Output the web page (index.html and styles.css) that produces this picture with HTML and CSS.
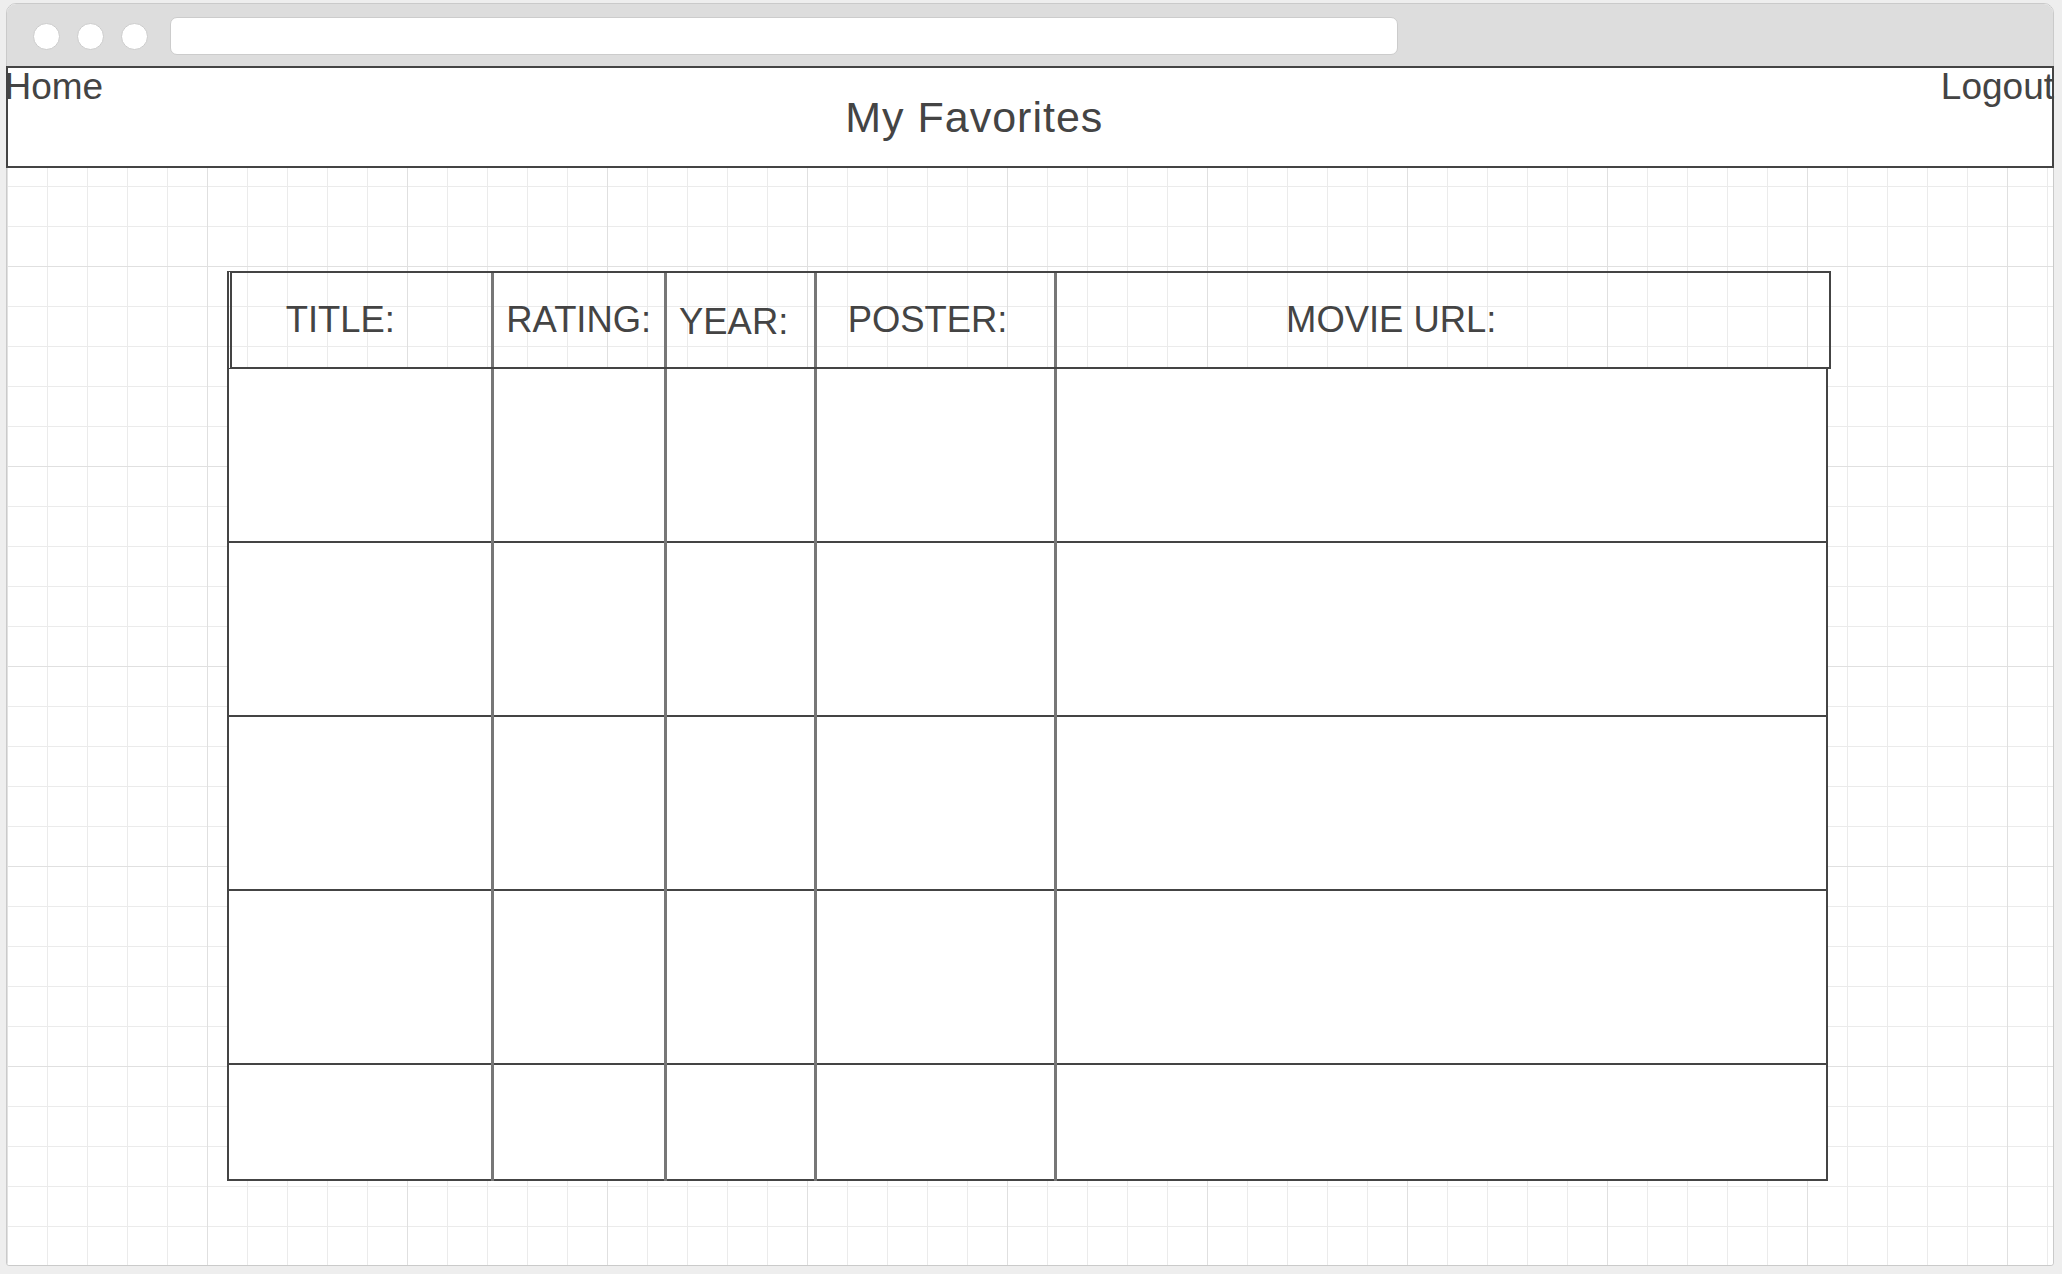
FILE: index.html
```html
<!DOCTYPE html>
<html lang="en">
<head>
<meta charset="utf-8">
<title>My Favorites</title>
<link rel="stylesheet" href="styles.css">
</head>
<body>
<div class="window">
  <div class="chrome">
    <span class="dot"></span>
    <span class="dot"></span>
    <span class="dot"></span>
    <div class="address"></div>
  </div>
  <div class="canvas">
    <header class="topbar">
      <a class="nav-link nav-home">Home</a>
      <h1 class="page-title">My Favorites</h1>
      <a class="nav-link nav-logout">Logout</a>
    </header>
    <section class="favorites">
      <div class="thead">
        <div class="th th-title">TITLE:</div>
        <div class="th th-rating">RATING:</div>
        <div class="th th-year">YEAR:</div>
        <div class="th th-poster">POSTER:</div>
        <div class="th th-url">MOVIE URL:</div>
      </div>
      <div class="tbody">
        <div class="col col-title">
          <div class="cell"></div><div class="cell"></div><div class="cell"></div><div class="cell"></div><div class="cell cell-last"></div>
        </div>
        <div class="col col-rating">
          <div class="cell"></div><div class="cell"></div><div class="cell"></div><div class="cell"></div><div class="cell cell-last"></div>
        </div>
        <div class="col col-year">
          <div class="cell"></div><div class="cell"></div><div class="cell"></div><div class="cell"></div><div class="cell cell-last"></div>
        </div>
        <div class="col col-poster">
          <div class="cell"></div><div class="cell"></div><div class="cell"></div><div class="cell"></div><div class="cell cell-last"></div>
        </div>
        <div class="col col-url">
          <div class="cell"></div><div class="cell"></div><div class="cell"></div><div class="cell"></div><div class="cell cell-last"></div>
        </div>
      </div>
    </section>
  </div>
</div>
</body>
</html>
```
FILE: styles.css
```css
html, body {
  margin: 0;
  padding: 0;
}

body {
  background: #eeeeee;
  font-family: "Liberation Sans", Arial, sans-serif;
  color: #444444;
  height: 1274px;
  overflow: hidden;
}

.window {
  box-sizing: border-box;
  width: 2048px;
  height: 1263px;
  margin: 3px 0 0 6px;
  border: 1px solid #cacaca;
  border-radius: 10px 10px 3px 3px;
  background: #ffffff;
  display: flex;
  flex-direction: column;
}

.chrome {
  box-sizing: border-box;
  height: 62px;
  flex: none;
  background: #dddddd;
  border-radius: 9px 9px 0 0;
  display: flex;
  align-items: center;
  gap: 17px;
  padding: 2px 0 0 26px;
}

.dot {
  box-sizing: border-box;
  width: 27px;
  height: 27px;
  border-radius: 50%;
  background: #ffffff;
  border: 1.5px solid #cccccc;
}

.address {
  box-sizing: border-box;
  width: 1228px;
  height: 38px;
  margin-left: 5px;
  background: #ffffff;
  border: 1px solid #cccccc;
  border-radius: 7px;
}

.canvas {
  flex: 1;
  background-color: #ffffff;
  background-image:
    linear-gradient(to right, #e0e0e0 1px, transparent 1px),
    linear-gradient(to bottom, #e0e0e0 1px, transparent 1px),
    linear-gradient(to right, #ebebeb 1px, transparent 1px),
    linear-gradient(to bottom, #ebebeb 1px, transparent 1px);
  background-size: 200px 200px, 200px 200px, 40px 40px, 40px 40px;
  border-radius: 0 0 3px 3px;
}

.topbar {
  box-sizing: border-box;
  height: 101.5px;
  margin: 0 -1px;
  border: 2px solid #444444;
  background: #ffffff;
  display: flex;
  align-items: flex-start;
}

.nav-link {
  font-size: 37px;
  line-height: normal;
  margin-top: -2.5px;
  color: #444444;
  white-space: nowrap;
}

.nav-home {
  margin-left: -3.5px;
}

.nav-logout {
  margin-right: -2px;
}

.page-title {
  flex: 1;
  margin: 25.2px 0 0 0;
  padding-left: 742px;
  font-size: 43px;
  font-weight: normal;
  letter-spacing: 1px;
  line-height: normal;
  white-space: nowrap;
}

.favorites {
  padding: 103.2px 0 0 219.7px;
}

.thead {
  box-sizing: border-box;
  display: flex;
  width: 1604.3px;
  height: 98.6px;
  border: 2px solid #444444;
  border-left: 5px double #444444;
}

.th {
  box-sizing: border-box;
  display: flex;
  align-items: center;
  font-size: 36.4px;
  white-space: nowrap;
  border-right: 3px solid #777777;
}

.th-title { width: 262px; padding-left: 54px; }
.th-rating { width: 173.6px; padding-left: 12.6px; }
.th-year { width: 150px; padding-left: 11.8px; padding-top: 4px; }
.th-poster { width: 240px; padding-left: 30.4px; }
.th-url { flex: 1; padding-left: 228.8px; border-right: none; }

.tbody {
  box-sizing: border-box;
  display: flex;
  width: 1601px;
  border-left: 2px solid #444444;
  border-right: 2px solid #444444;
  background: #ffffff;
}

.col {
  box-sizing: border-box;
  border-right: 3px solid #777777;
}

.col-title { width: 265px; }
.col-rating { width: 173.6px; }
.col-year { width: 150px; }
.col-poster { width: 240px; }
.col-url { flex: 1; border-right: none; }

.cell {
  box-sizing: border-box;
  height: 174px;
  border-bottom: 2px solid #444444;
}

.cell-last {
  height: 116px;
}
```
